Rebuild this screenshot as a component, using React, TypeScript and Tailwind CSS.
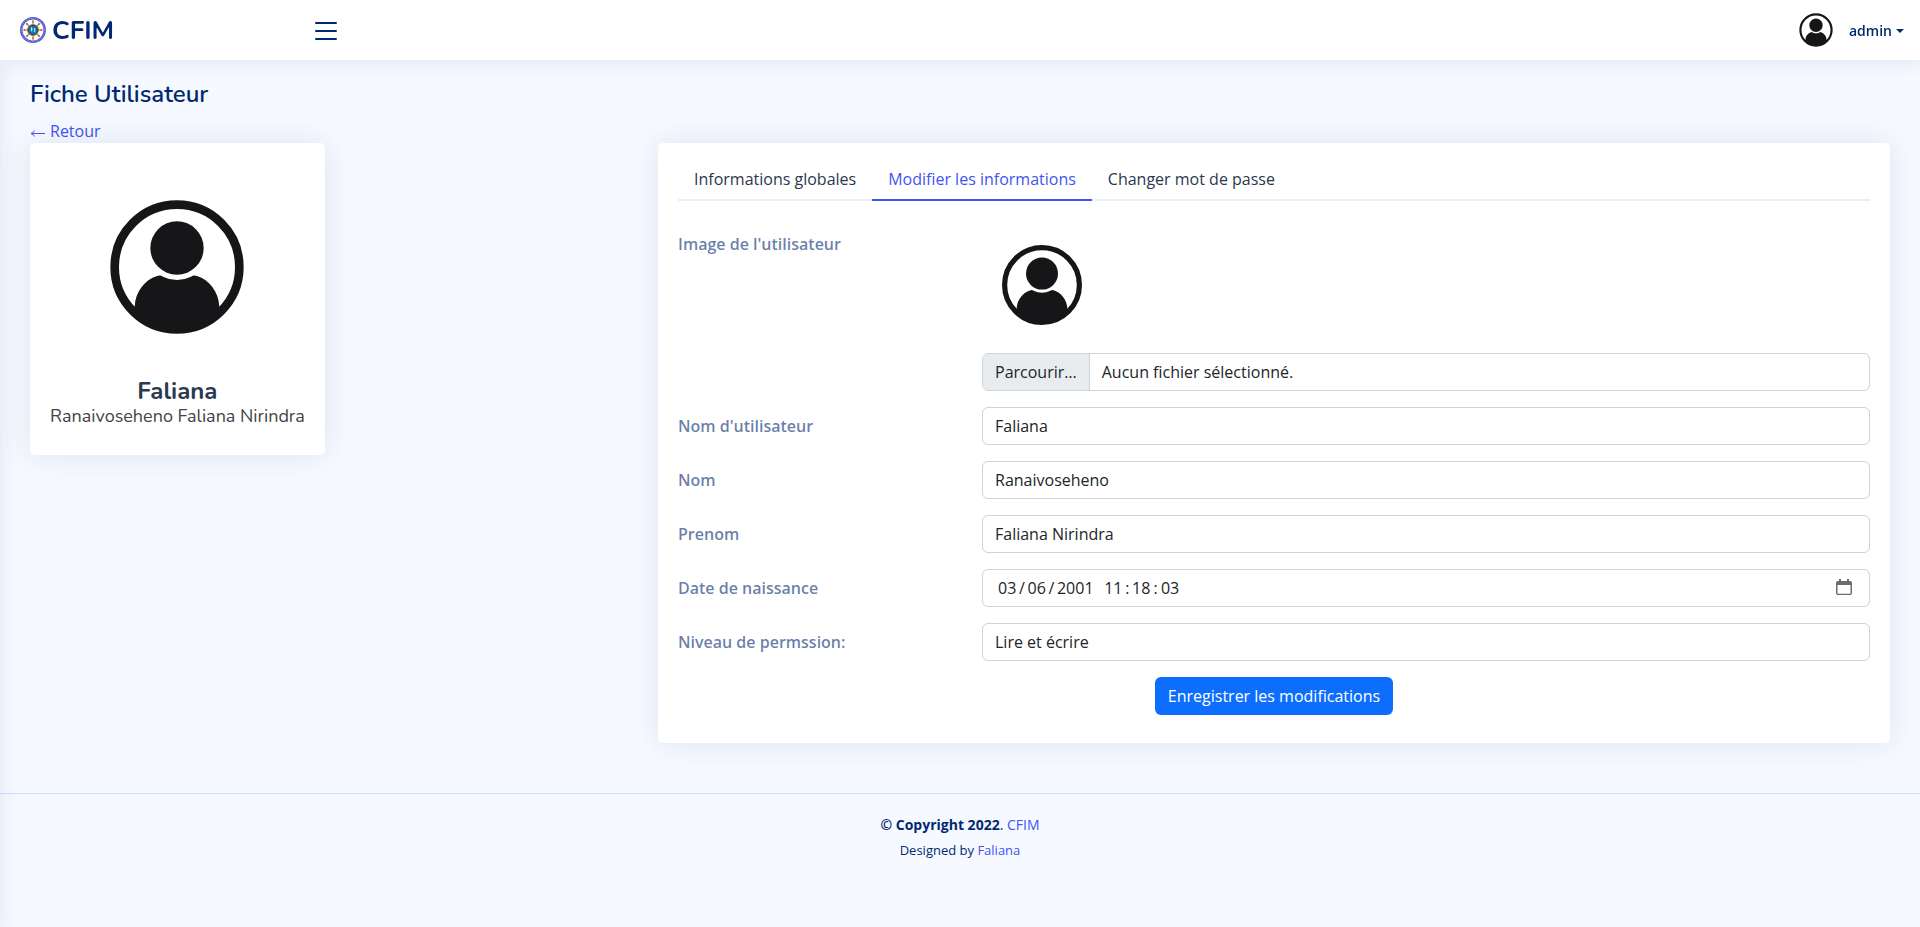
import React, { useState } from "react";
import { BsList } from "react-icons/bs";

const fieldClass =
  "h-[38px] w-full appearance-none rounded-md border border-[#ced4da] bg-white px-3 text-base text-[#212529] outline-none focus:border-[#86b7fe]";
const linkClass = "text-[#4154f1] hover:text-[#717ff5]";
const cardClass = "rounded-[5px] bg-white shadow-[0_0_30px_rgba(1,41,112,0.1)]";

function Avatar({ className }: { className: string }) {
  return (
    <svg viewBox="0 0 600 600" className={className} role="img" aria-label="Profil">
      <circle cx="300" cy="300" r="187" fill="#fff" stroke="#161618" strokeWidth="26" />
      <circle cx="300" cy="243" r="80" fill="#161618" />
      <path
        fill="#161618"
        d="M173 419C175 374 203 339 240 327Q250 323 258 329Q278 339 300 339Q322 339 342 329Q350 323 360 327C397 339 425 374 427 419L436 430A188 188 0 0 1 164 430Z"
      />
    </svg>
  );
}

function Logo() {
  const spokes = [0, 45, 90, 135, 180, 225, 270, 315];
  return (
    <svg viewBox="0 0 52 52" className="size-[26px]" aria-hidden="true">
      <circle cx="26" cy="26" r="23.5" fill="#fff" stroke="#5a58d6" strokeWidth="5" />
      <circle cx="26" cy="26" r="23" fill="none" stroke="#a9a8f0" strokeWidth="1.6" strokeDasharray="2 2" />
      {spokes.map((angle) => (
        <g key={angle} transform={`rotate(${angle} 26 26)`}>
          <path d="M26 16V7" stroke="#b98a4c" strokeWidth="2.8" />
          <circle cx="26" cy="9" r="2" fill="#b07c3a" />
        </g>
      ))}
      <circle cx="26" cy="26" r="11" fill="#12395f" stroke="#a8844f" strokeWidth="2.2" />
      <circle cx="26" cy="26" r="8" fill="#1279b4" />
      <path d="M22 20l3 2-1 8-2-3zM28 22l3 1-1 4 1 4-3-2z" fill="#bfe6f7" />
    </svg>
  );
}

function Row({ id, label, children }: { id: string; label: string; children: React.ReactNode }) {
  return (
    <div className="grid grid-cols-4 gap-6">
      <label htmlFor={id} className="py-[7px] font-semibold text-[#012970]/60">
        {label}
      </label>
      <div className="col-span-3">{children}</div>
    </div>
  );
}

const tabs = ["Informations globales", "Modifier les informations", "Changer mot de passe"];

export default function App() {
  const [active, setActive] = useState(1);

  return (
    <div className="flex min-h-screen flex-col overflow-x-hidden bg-[#f6f9ff] font-['Open_Sans',sans-serif] text-base text-[#444444]">
      <header className="relative z-20 flex h-[60px] items-center bg-white pr-4 pl-5 shadow-[0_2px_20px_rgba(1,41,112,0.1)]">
        <div className="flex w-[290px] items-center">
          <a href="#" className="flex items-center gap-[6px]">
            <Logo />
            <span className="pt-0.5 font-['Nunito','Lato',sans-serif] text-[26px] leading-none font-bold text-[#012970]">CFIM</span>
          </a>
        </div>
        <button type="button" aria-label="Menu" className="pt-0.5 text-[#012970]">
          <BsList size={32} />
        </button>
        <button type="button" className="ml-auto flex items-center gap-2 text-sm font-semibold text-[#012970]">
          <Avatar className="size-[50px]" />
          <span className="flex items-center gap-1 pt-0.5">
            admin
            <svg viewBox="0 0 8 4" className="h-1 w-2" aria-hidden="true">
              <path d="M0 0h8L4 4z" fill="currentColor" />
            </svg>
          </span>
        </button>
      </header>
      <aside
        aria-hidden="true"
        className="fixed top-[60px] bottom-0 -left-[300px] z-10 w-[300px] bg-white shadow-[0_0_20px_rgba(1,41,112,0.1)]"
      />

      <main className="px-[30px] pt-5">
        <h1 className="font-['Nunito','Lato',sans-serif] text-2xl leading-7 font-semibold text-[#012970]">Fiche Utilisateur</h1>
        <a href="#" className={`mt-[11px] flex w-fit items-center gap-1 leading-6 ${linkClass}`}>
          <svg viewBox="0 0 16 10" className="mt-1 h-[10px] w-4" fill="none" stroke="currentColor" aria-hidden="true">
            <path d="M1 5.500H15M4.500 2.500Q3.500 5 1 5.500Q3.500 6 4.500 8.500" />
          </svg>
          Retour
        </a>

        <div className="grid grid-cols-3 items-start gap-6">
          <section className={`flex w-fit flex-col items-center px-5 pt-6 pb-7 font-['Nunito','Lato',sans-serif] ${cardClass}`}>
            <Avatar className="size-[200px]" />
            <h2 className="mt-[10px] text-2xl leading-7 font-bold text-[#2c384e]">Faliana</h2>
            <h3 className="text-lg leading-[22px]">Ranaivoseheno Faliana Nirindra</h3>
          </section>

          <section className={`col-span-2 px-5 pt-4 pb-7 ${cardClass}`}>
            <div role="tablist" className="flex border-b-2 border-[#ebeef4]">
              {tabs.map((tab, index) => (
                <button
                  key={tab}
                  type="button"
                  role="tab"
                  aria-selected={active === index}
                  onClick={() => setActive(index)}
                  className={
                    active === index
                      ? "-mb-0.5 border-b-2 border-[#4154f1] px-4 py-2 text-[#4154f1]"
                      : "-mb-0.5 border-b-2 border-transparent px-4 py-2 text-[#2c384e]"
                  }
                >
                  {tab}
                </button>
              ))}
            </div>

            <form className="flex flex-col gap-4 pt-6" onSubmit={(event) => event.preventDefault()}>
              <Row id="image" label="Image de l'utilisateur">
                <Avatar className="size-[120px]" />
                <input id="image" type="file" className="peer sr-only" />
                <label
                  htmlFor="image"
                  className="mt-2 flex h-[38px] cursor-pointer items-stretch overflow-hidden rounded-md border border-[#ced4da] leading-9 text-[#212529]"
                >
                  <span className="border-r border-[#ced4da] bg-[#e9ecef] px-3">Parcourir…</span>
                  <span className="px-3">Aucun fichier sélectionné.</span>
                </label>
              </Row>
              <Row id="username" label="Nom d'utilisateur">
                <input id="username" type="text" defaultValue="Faliana" className={fieldClass} />
              </Row>
              <Row id="nom" label="Nom">
                <input id="nom" type="text" defaultValue="Ranaivoseheno" className={fieldClass} />
              </Row>
              <Row id="prenom" label="Prenom">
                <input id="prenom" type="text" defaultValue="Faliana Nirindra" className={fieldClass} />
              </Row>
              <Row id="naissance" label="Date de naissance">
                <div className="flex h-[38px] items-center rounded-md border border-[#ced4da] pr-[17px] pl-[15px] text-[#212529]">
                  <input
                    id="naissance"
                    type="text"
                    defaultValue={"03\u2009/\u200906\u2009/\u20092001\u2002\u200911\u2009:\u200918\u200A\u200A:\u200A\u200A03"}
                    className="min-w-0 flex-1 bg-transparent outline-none"
                  />
                  <button type="button" aria-label="Choisir une date" className="pb-0.5 text-[#6b6b70]">
                    <svg viewBox="0 0 16 16" className="size-4" aria-hidden="true">
                      <path
                        fill="currentColor"
                        fillRule="evenodd"
                        d="M3 0h2v2h6V0h2v2h1a2 2 0 0 1 2 2v10a2 2 0 0 1-2 2H2a2 2 0 0 1-2-2V4a2 2 0 0 1 2-2h1zM1.500 6v8a.7.7 0 0 0 .7.7h11.600a.7.7 0 0 0 .7-.7V6z"
                      />
                    </svg>
                  </button>
                </div>
              </Row>
              <Row id="niveau" label="Niveau de permssion:">
                <select id="niveau" className={fieldClass}>
                  <option>Lire et écrire</option>
                </select>
              </Row>
              <button type="submit" className="h-[38px] self-center rounded-md bg-[#0d6efd] px-[13px] text-white">
                Enregistrer les modifications
              </button>
            </form>
          </section>
        </div>
      </main>

      <footer className="mt-[50px] border-t border-[#cddfff] py-5 text-center text-[#012970]">
        <p className="text-sm leading-[21px]">
          <strong className="font-bold">© Copyright 2022</strong>. <a href="#" className={linkClass}>CFIM</a>
        </p>
        <p className="pt-[5px] text-[13px] leading-5">
          Designed by <a href="#" className={linkClass}>Faliana</a>
        </p>
      </footer>
    </div>
  );
}
